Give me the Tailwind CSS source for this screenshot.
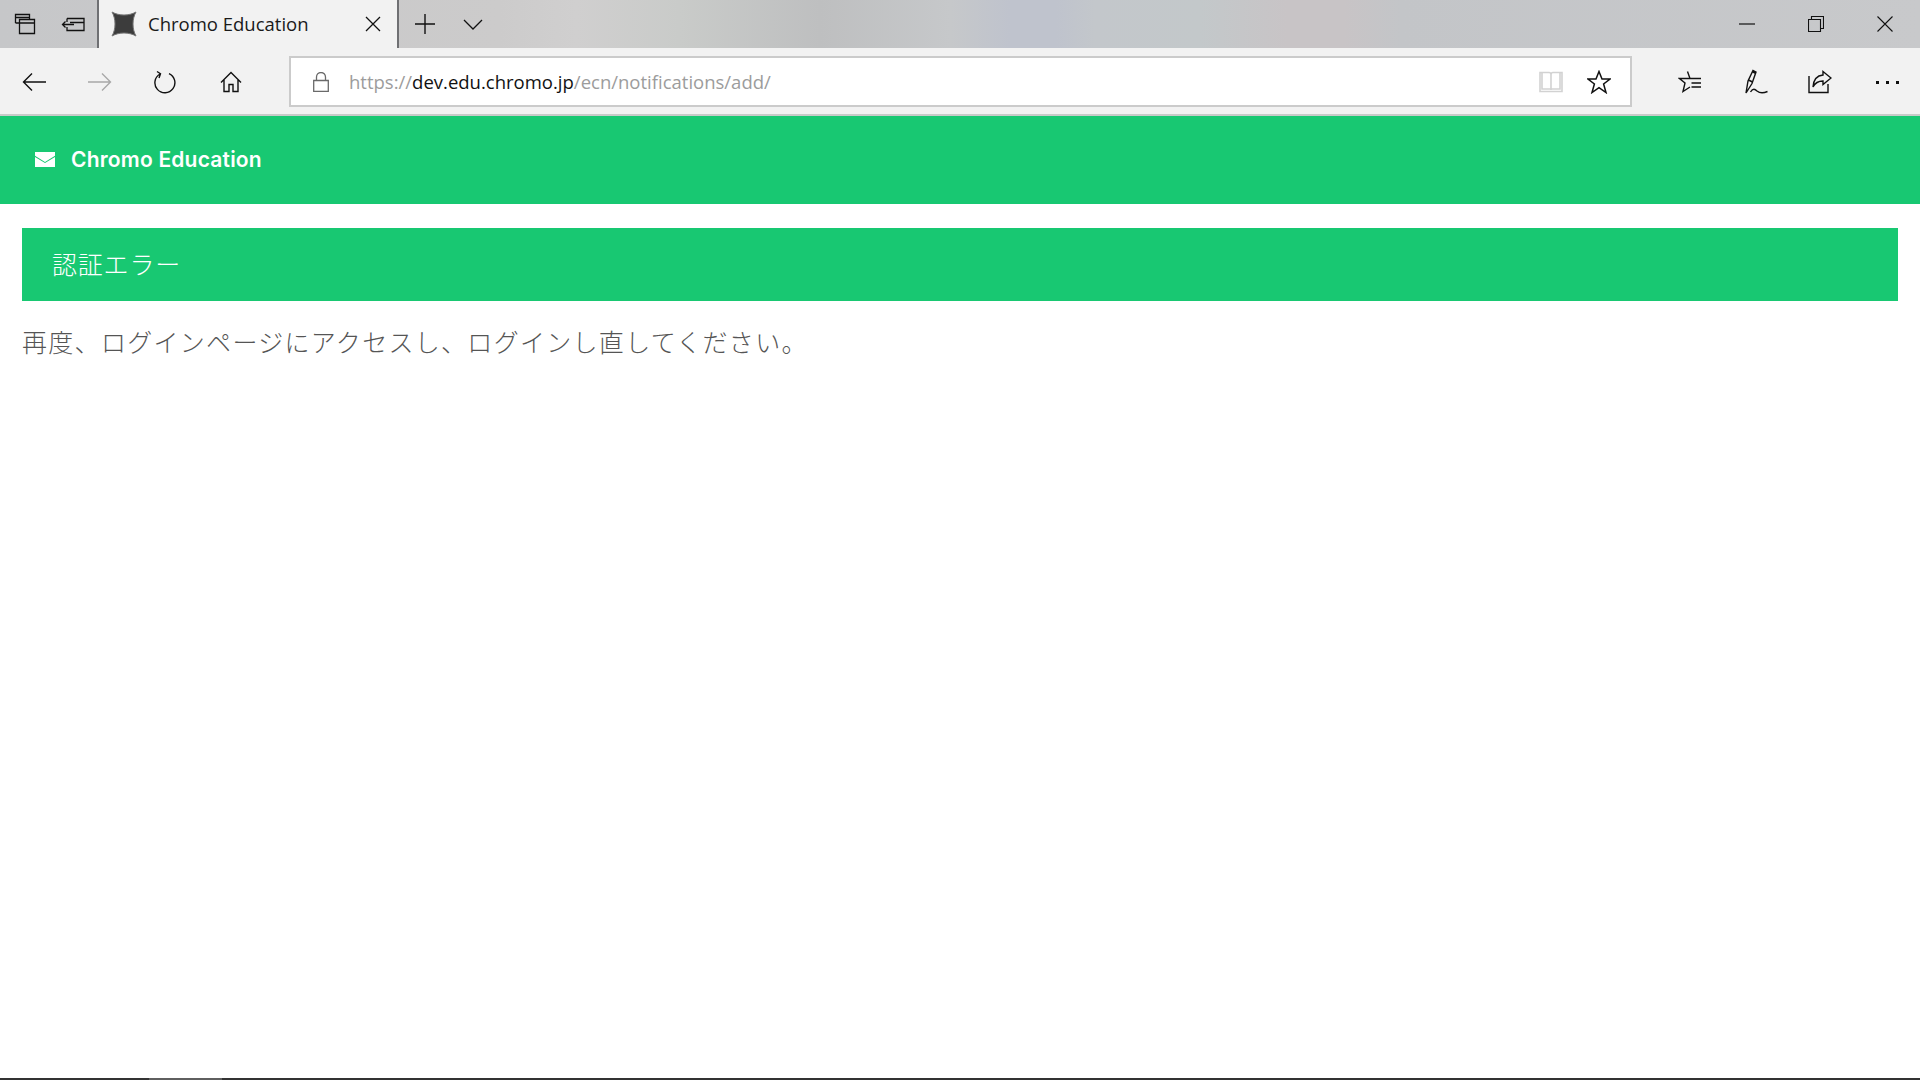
<!DOCTYPE html>
<html lang="ja">
<head>
  <meta charset="UTF-8">
  <title>Chromo Education</title>
  <script src="https://cdn.jsdelivr.net/npm/@tailwindcss/browser@4"></script>
</head>
<body class="h-[1080px] w-[1920px] overflow-hidden bg-white flex flex-col font-['Open_Sans','Noto_Sans_CJK_JP',sans-serif]">
  <!-- tab strip -->
  <div class="h-[48px] flex items-stretch bg-[linear-gradient(90deg,#c6c7c9_0%,#cccbcb_26%,#d0cfcf_30%,#c9cbc9_35.4%,#bebfc0_42.7%,#c6c8ca_49.5%,#bfc3cd_52.6%,#bfc3cd_55%,#c3c7cb_57%,#c3c8ca_62.5%,#c8c4c6_67%,#c8c4c6_70%,#c3c5c8_73%,#c8c9cb_100%)]">
    <div class="w-[49px] flex items-center justify-center">
      <svg width="22" height="22" viewBox="0 0 22 22" fill="none" stroke="#111" stroke-width="1.3"><path d="M1.5 10V1.5H15.5V6M1.5 4.5H15.5"/><path d="M5.5 6.5H20.5V20.5H5.5ZM5.5 10H20.5M1.5 10H5.5"/></svg>
    </div>
    <div class="w-[48px] flex items-center justify-center">
      <svg width="24" height="16" viewBox="0 0 24 16" fill="none" stroke="#111" stroke-width="1.3"><path d="M6 2.5H23V14.5H6V11M6 6V2.5M9 6.5H23"/><path d="M13 8.5H1.5M4.5 5.5L1.5 8.5L4.5 11.5"/></svg>
    </div>
    <div class="w-[302px] h-full bg-[#f2f2f2] border-x-2 border-[#6f7073] flex items-center pl-[12px] pr-[16px]">
      <svg class="mr-[11px] shrink-0" width="26" height="26" viewBox="0 0 26 26"><path d="M1 1C8 5 18 5 25 1C21 8 21 18 25 25C18 21 8 21 1 25C5 18 5 8 1 1Z" fill="#3c3c3c" stroke="#777" stroke-width="1"/></svg>
      <span class="text-[18.5px] text-[#1a1a1a] flex-1 whitespace-nowrap">Chromo Education</span>
      <svg width="16" height="16" viewBox="0 0 16 16" fill="none" stroke="#111" stroke-width="1.3"><path d="M1 1L15 15M15 1L1 15"/></svg>
    </div>
    <div class="w-[51px] flex items-center justify-center">
      <svg width="22" height="22" viewBox="0 0 22 22" fill="none" stroke="#111" stroke-width="1.4"><path d="M11 1V21M1 11H21"/></svg>
    </div>
    <div class="w-[46px] flex items-center justify-center">
      <svg width="20" height="11" viewBox="0 0 20 11" fill="none" stroke="#111" stroke-width="1.3"><path d="M1 1L10 10L19 1"/></svg>
    </div>
    <div class="flex-1"></div>
    <div class="w-[69px] flex items-center justify-center">
      <svg width="16" height="2" viewBox="0 0 16 2"><path d="M0 1H16" stroke="#111" stroke-width="1.2"/></svg>
    </div>
    <div class="w-[69px] flex items-center justify-center">
      <svg width="16" height="16" viewBox="0 0 16 16" fill="none" stroke="#111" stroke-width="1.1"><path d="M.5 3.5H12.5V15.5H.5ZM3.5 3.5V.5H15.5V12.5H12.5"/></svg>
    </div>
    <div class="w-[70px] flex items-center justify-center pr-[1px]">
      <svg width="16" height="16" viewBox="0 0 16 16" fill="none" stroke="#111" stroke-width="1.1"><path d="M.5 .5L15.5 15.5M15.5 .5L.5 15.5"/></svg>
    </div>
  </div>

  <!-- toolbar -->
  <div class="h-[68px] pt-[2px] bg-[#f2f2f2] border-b-2 border-[#c8cbc9] flex items-center">
    <div class="w-[67px] flex justify-center">
      <svg width="24" height="20" viewBox="0 0 24 20" fill="none" stroke="#111" stroke-width="1.4"><path d="M24 10H1.5M10 1.5L1.5 10L10 18.5"/></svg>
    </div>
    <div class="w-[65px] flex justify-center">
      <svg width="24" height="20" viewBox="0 0 24 20" fill="none" stroke="#a8a8a8" stroke-width="1.4"><path d="M0 10H22.5M14 1.5L22.5 10L14 18.5"/></svg>
    </div>
    <div class="w-[66px] flex justify-center">
      <svg width="22" height="24" viewBox="0 0 22 24" fill="none" stroke="#111" stroke-width="1.4"><path d="M15 3.6A10 10 0 1 1 6 4M3 1.5L6.5 3.7L5 8"/></svg>
    </div>
    <div class="w-[66px] flex justify-center">
      <svg width="22" height="22" viewBox="0 0 22 22" fill="none" stroke="#111" stroke-width="1.4"><path d="M1 11.5L11 1.5L21 11.5M4 9V20.5H9V13.5H13V20.5H18V9"/></svg>
    </div>
    <div class="ml-[25px] w-[1343px] h-[51px] mb-[1px] bg-white border-2 border-[#cbcbcb] flex items-center pl-[22px] pr-[19px]">
      <svg class="shrink-0" width="16" height="20" viewBox="0 0 16 20" fill="none" stroke="#6a6a6a" stroke-width="1.3"><path d="M.7 8.5H15.3V19.3H.7ZM3.5 8.5V5A4.5 4.5 0 0 1 12.5 5V8.5"/></svg>
      <div class="ml-[20px] flex-1 pt-[1px] text-[18.5px] whitespace-nowrap text-[#9c9c9c]">https://<span class="text-[#111]">dev.edu.chromo.jp</span>/ecn/notifications/add/</div>
      <svg class="mr-[24px]" width="24" height="22" viewBox="0 0 24 22" fill="none" stroke="#d2d2d2" stroke-width="1.6"><path d="M1 1.5H10C11 1.5 12 2 12 3.5C12 2 13 1.5 14 1.5H23V20.5H1ZM12 3.5V19M3 1.5V18H21V1.5"/></svg>
      <svg width="24" height="24" viewBox="0 0 24 24" fill="none" stroke="#111" stroke-width="1.5"><path d="M12 1.5L15 9H23L16.6 14L19 22.5L12 17.6L5 22.5L7.4 14L1 9H9Z"/></svg>
    </div>
    <div class="ml-[46px] w-[24px] flex justify-center">
      <svg width="24" height="24" viewBox="0 0 24 24" fill="none" stroke="#111" stroke-width="1.4"><path d="M9.5 1.5L12 8.5H1.5L7 13L5 21.5L12 17M12 8.5H23M13.5 13H23M13.5 17H23"/></svg>
    </div>
    <div class="ml-[42px] w-[24px] flex justify-center">
      <svg width="24" height="26" viewBox="0 0 24 26" fill="none" stroke="#111" stroke-width="1.4"><path d="M2 24L4 12L9 1.5L12 3L8 14.5L2 24ZM4.5 11L8.5 13M9 3L12 4.5"/><path d="M6.5 23C9 19 11 20 13 22C16 24.5 20 24 23.5 22.5"/></svg>
    </div>
    <div class="ml-[40px] w-[24px] flex justify-center">
      <svg width="24" height="24" viewBox="0 0 24 24" fill="none" stroke="#111" stroke-width="1.4"><path d="M1 6V22.5H20V14"/><path d="M15 1.5L23 8L15 14.5V11C10 11 7 13 5 17C5.5 10 9 5.5 15 5Z"/></svg>
    </div>
    <div class="ml-[43px] w-[24px] flex justify-center gap-[7px]">
      <span class="w-[3px] h-[3px] bg-[#111]"></span>
      <span class="w-[3px] h-[3px] bg-[#111]"></span>
      <span class="w-[3px] h-[3px] bg-[#111]"></span>
    </div>
  </div>

  <!-- page header -->
  <header class="h-[88px] bg-[#18c872] flex items-center pl-[35px]">
    <svg class="mb-[1px]" width="20" height="15" viewBox="0 0 20 15"><path d="M0 0H20V3.8L10 10L0 3.8ZM0 4.9L10 11.1L20 4.9V15H0Z" fill="#fff"/></svg>
    <span class="ml-[16px] text-[21px] font-semibold text-white tracking-[0.2px] font-['Inter',sans-serif]">Chromo Education</span>
  </header>

  <!-- main -->
  <main class="flex-1 px-[22px] pt-[24px]">
    <div class="h-[73px] bg-[#18c872] flex items-center pl-[30px] text-[25px] font-light text-white tracking-[0.8px]">認証エラー</div>
    <p class="mt-[23px] text-[25px] leading-[36px] font-light text-[#555] tracking-[1.3px]">再度、ログインページにアクセスし、ログインし直してください。</p>
  </main>

  <!-- taskbar edge -->
  <div class="h-[2px] bg-[#333] flex shrink-0">
    <div class="ml-[149px] w-[73px] bg-[#5f5f5f]"></div>
  </div>
</body>
</html>
